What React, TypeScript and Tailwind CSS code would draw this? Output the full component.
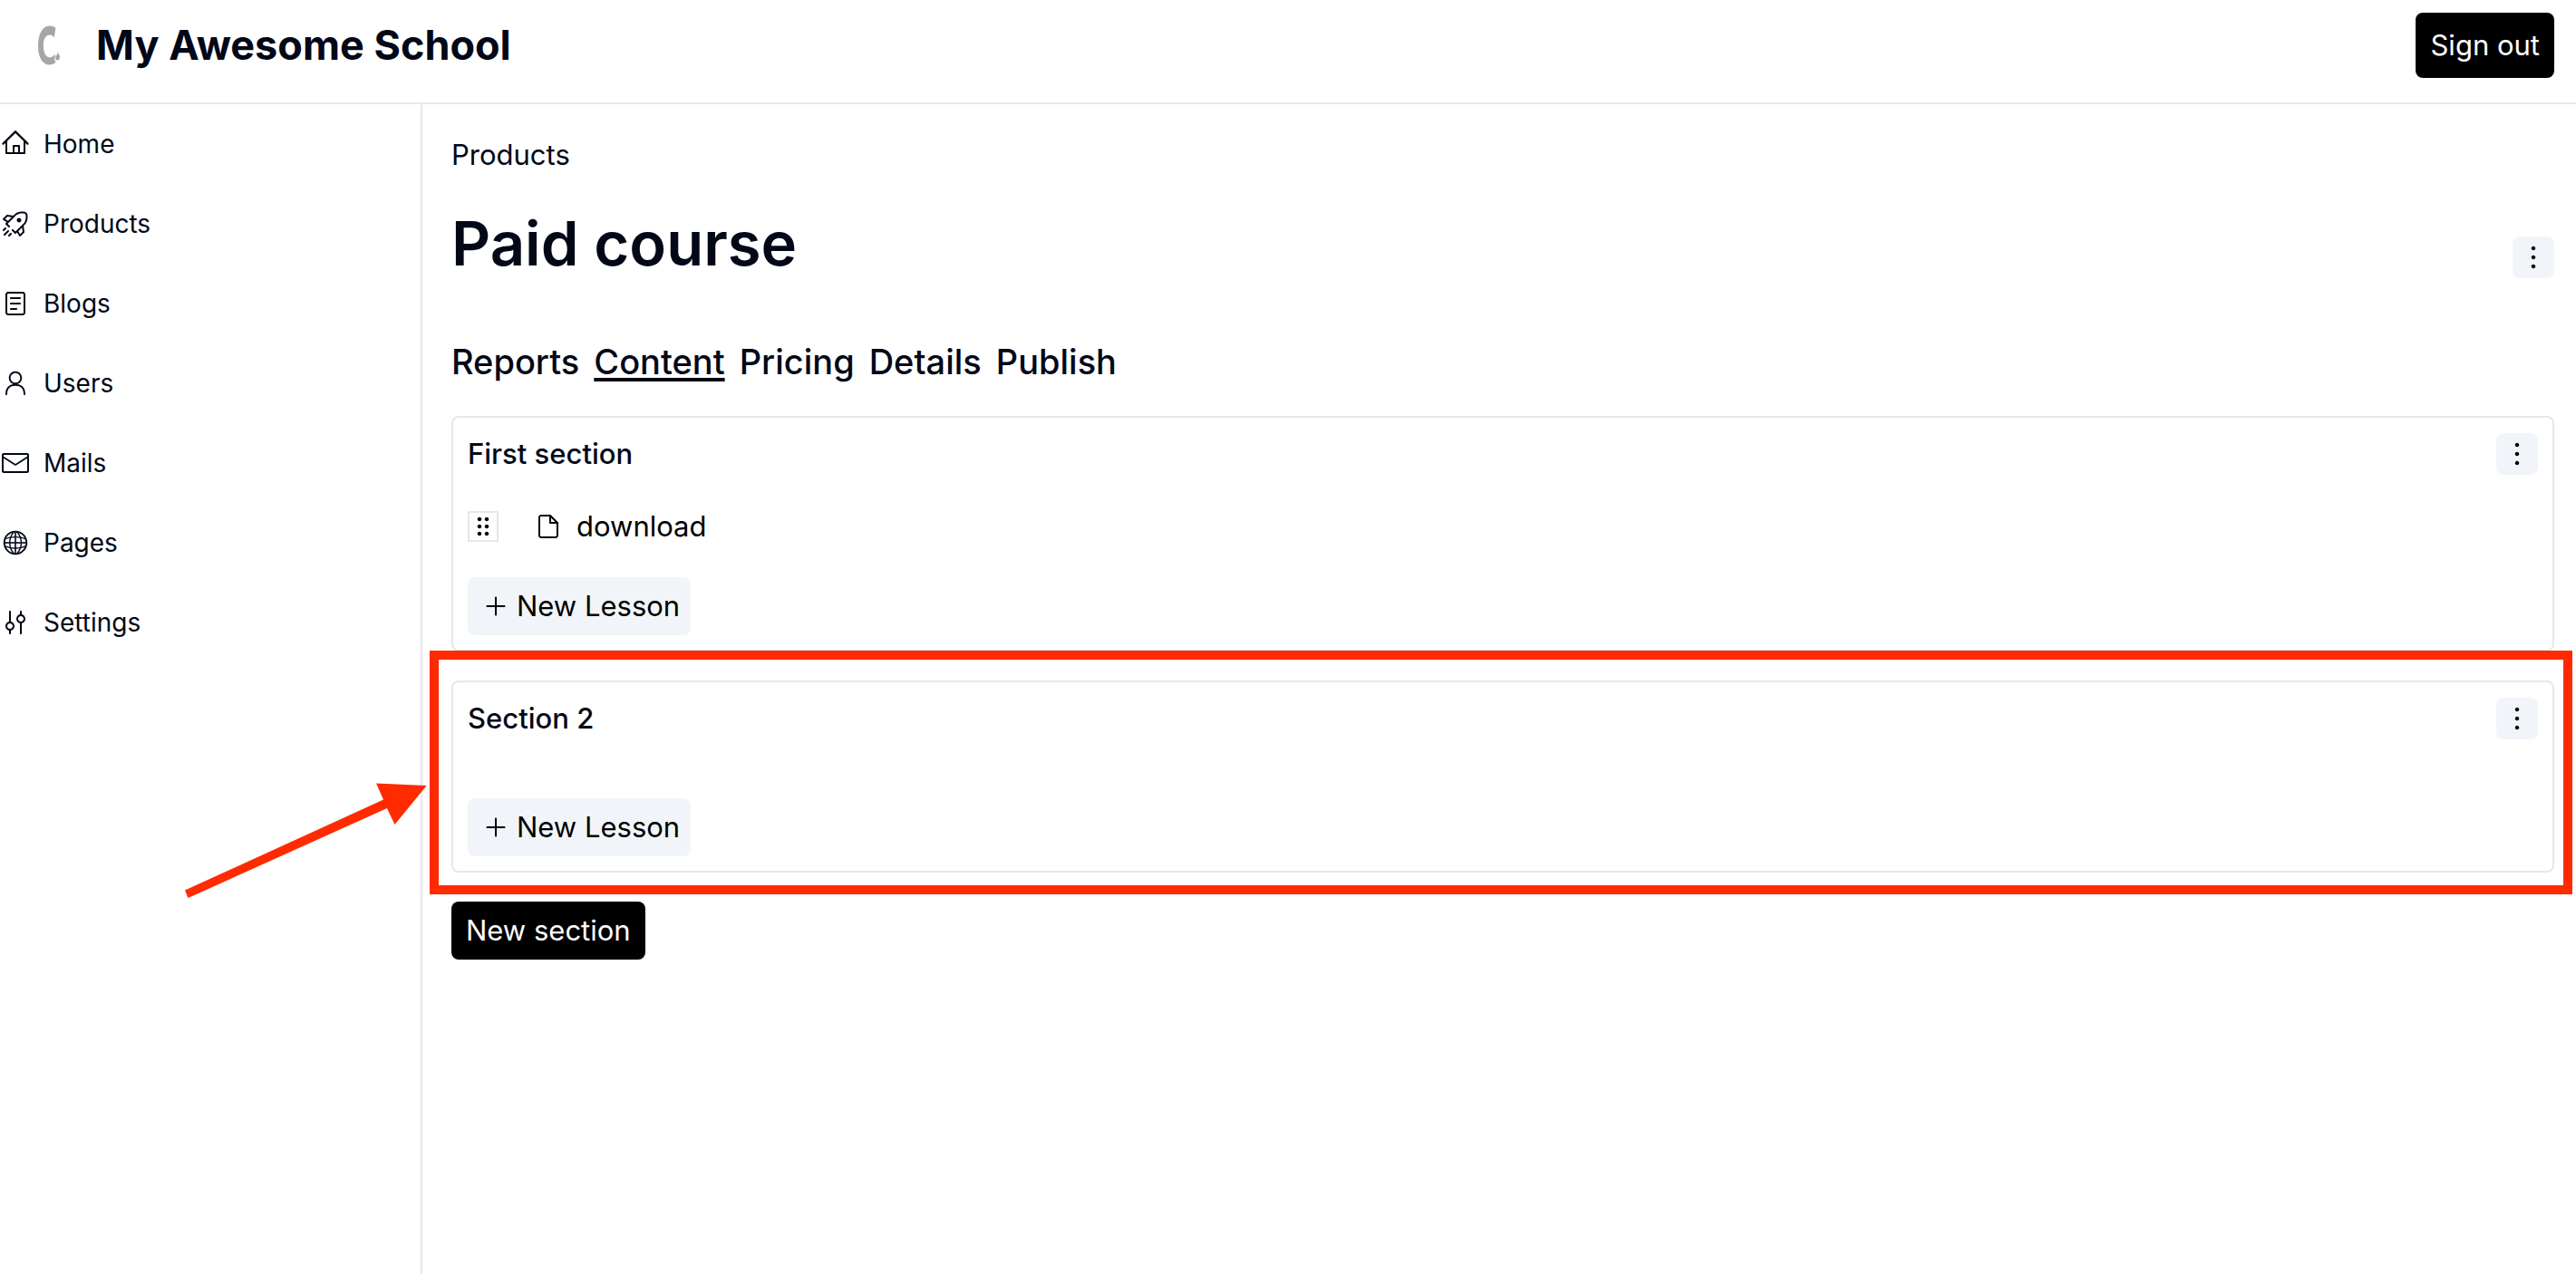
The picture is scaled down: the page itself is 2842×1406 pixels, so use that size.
import React from 'react';
import {
  RxHome, RxRocket, RxReader, RxPerson, RxEnvelopeClosed, RxGlobe, RxMixerVertical,
  RxDragHandleDots2, RxFile, RxPlus, RxDotsVertical,
} from 'react-icons/rx';

const NAV = [
  { label: 'Home', Icon: RxHome },
  { label: 'Products', Icon: RxRocket },
  { label: 'Blogs', Icon: RxReader },
  { label: 'Users', Icon: RxPerson },
  { label: 'Mails', Icon: RxEnvelopeClosed },
  { label: 'Pages', Icon: RxGlobe },
  { label: 'Settings', Icon: RxMixerVertical },
];

const TABS = ['Reports', 'Content', 'Pricing', 'Details', 'Publish'];

function Logo() {
  return (
    <svg viewBox="0 0 24 44" className="h-11 w-6 shrink-0" aria-hidden="true">
      <path
        d="M19.400 2.800C17.300 1.200 15 0.500 12.600 0.500C5 0.500 0 9.500 0 22.500C0 35.500 5 43.500 12.600 43.500C15.400 43.500 17.800 42.600 19.600 40.600C18.300 38.800 18 36.400 18.600 34L18 32C16.600 34.200 15 35.400 13.200 35.400C8.600 35.400 5.800 30 5.800 22C5.800 14.500 8.800 10.400 13 10.400C15 10.400 16.600 11.600 17.800 13.400Z"
        fill="#a6a6a6"
      />
      <path d="M21.600 29C22.200 31.200 24 32.600 24 35C24 37 23 38.400 21.500 38.400C20 38.400 19.100 37 19.100 35.200C19.100 34 19.500 33.200 20 32.600L20.600 33.400C21.200 32.200 21.600 30.800 21.600 29Z" fill="#a6a6a6" />
    </svg>
  );
}

function MenuButton({ label }: { label: string }) {
  return (
    <button type="button" aria-label={label} className="flex size-[46px] shrink-0 items-center justify-center rounded-lg bg-slate-100 text-black">
      <RxDotsVertical className="size-[30px]" />
    </button>
  );
}

function Section({ title, lessons }: { title: string; lessons: string[] }) {
  return (
    <section className="flex flex-col gap-8 rounded-lg border-2 border-gray-200 p-4">
      <div className="flex h-12 items-center justify-between">
        <h2 className="text-[31px] leading-[48px] font-medium">{title}</h2>
        <MenuButton label={`${title} options`} />
      </div>
      <ul>
        {lessons.map((lesson) => (
          <li key={lesson} className="flex items-center text-black">
            <button type="button" aria-label={`Reorder ${lesson}`} className="flex size-[34px] items-center justify-center border-2 border-gray-200">
              <RxDragHandleDots2 className="size-[30px] shrink-0" />
            </button>
            <a href="#lesson" className="ml-10 flex items-center gap-4 text-[31px] leading-[48px]">
              <RxFile className="size-[30px]" />
              {lesson}
            </a>
          </li>
        ))}
      </ul>
      <div className="flex">
        <button type="button" className="flex h-16 items-center gap-2 rounded-lg bg-slate-100 pr-3 pl-4 text-[31px] text-black">
          <RxPlus className="size-[30px]" />
          New Lesson
        </button>
      </div>
    </section>
  );
}

export default function App() {
  return (
    <div className="flex min-h-screen flex-col bg-white font-['Inter',sans-serif] text-[#020817]">
      <header className="flex items-start justify-between border-b-2 border-gray-200 pt-3.5 pr-6 pb-[27px] pl-[42px]">
        <a href="#home" className="flex h-[72px] items-center gap-10">
          <Logo />
          <span className="text-[45px] leading-[64px] font-bold">My Awesome School</span>
        </a>
        <button type="button" className="h-[72px] rounded-lg bg-black px-4 text-[31px] text-white">Sign out</button>
      </header>
      <div className="flex flex-1">
        <nav className="w-[466px] shrink-0 border-r-2 border-gray-200">
          {NAV.map(({ label, Icon }) => (
            <a key={label} href={`#${label.toLowerCase()}`} className="flex h-[88px] items-center gap-4 pl-0.5 text-[28px]">
              <Icon className="size-[30px]" />
              {label}
            </a>
          ))}
        </nav>
        <main className="min-w-0 flex-1 pt-8 pr-6 pl-8">
          <a href="#products" className="block text-[31px] leading-[48px]">Products</a>
          <div className="mt-9 flex items-end justify-between">
            <h1 className="text-[67px] leading-[76px] font-semibold">Paid course</h1>
            <MenuButton label="Course options" />
          </div>
          <div className="mt-16 flex gap-4 text-[38px] leading-[56px] font-medium">
            {TABS.map((tab) => (
              <a
                key={tab}
                href={`#${tab.toLowerCase()}`}
                className={tab === 'Content' ? 'underline decoration-4 underline-offset-4' : ''}
              >
                {tab}
              </a>
            ))}
          </div>
          <div className="mt-8 flex flex-col gap-8">
            <Section title="First section" lessons={['download']} />
            <div className="relative">
              <Section title="Section 2" lessons={[]} />
              <div className="pointer-events-none absolute -top-[33px] -right-5 -bottom-6 -left-6 border-[10px] border-[#ff2a00]" />
              <svg
                viewBox="0 0 280 140"
                className="pointer-events-none absolute top-[104px] -left-[300px] h-[140px] w-[280px]"
                aria-hidden="true"
              >
                <path d="M6 127.500L225 27.500L217 9.500L272.700 12L237.500 55L229 37L9.500 136Z" fill="#ff2a00" />
              </svg>
            </div>
            <div className="flex">
              <button type="button" className="h-16 rounded-lg bg-black px-4 text-[31px] text-white">New section</button>
            </div>
          </div>
        </main>
      </div>
    </div>
  );
}
